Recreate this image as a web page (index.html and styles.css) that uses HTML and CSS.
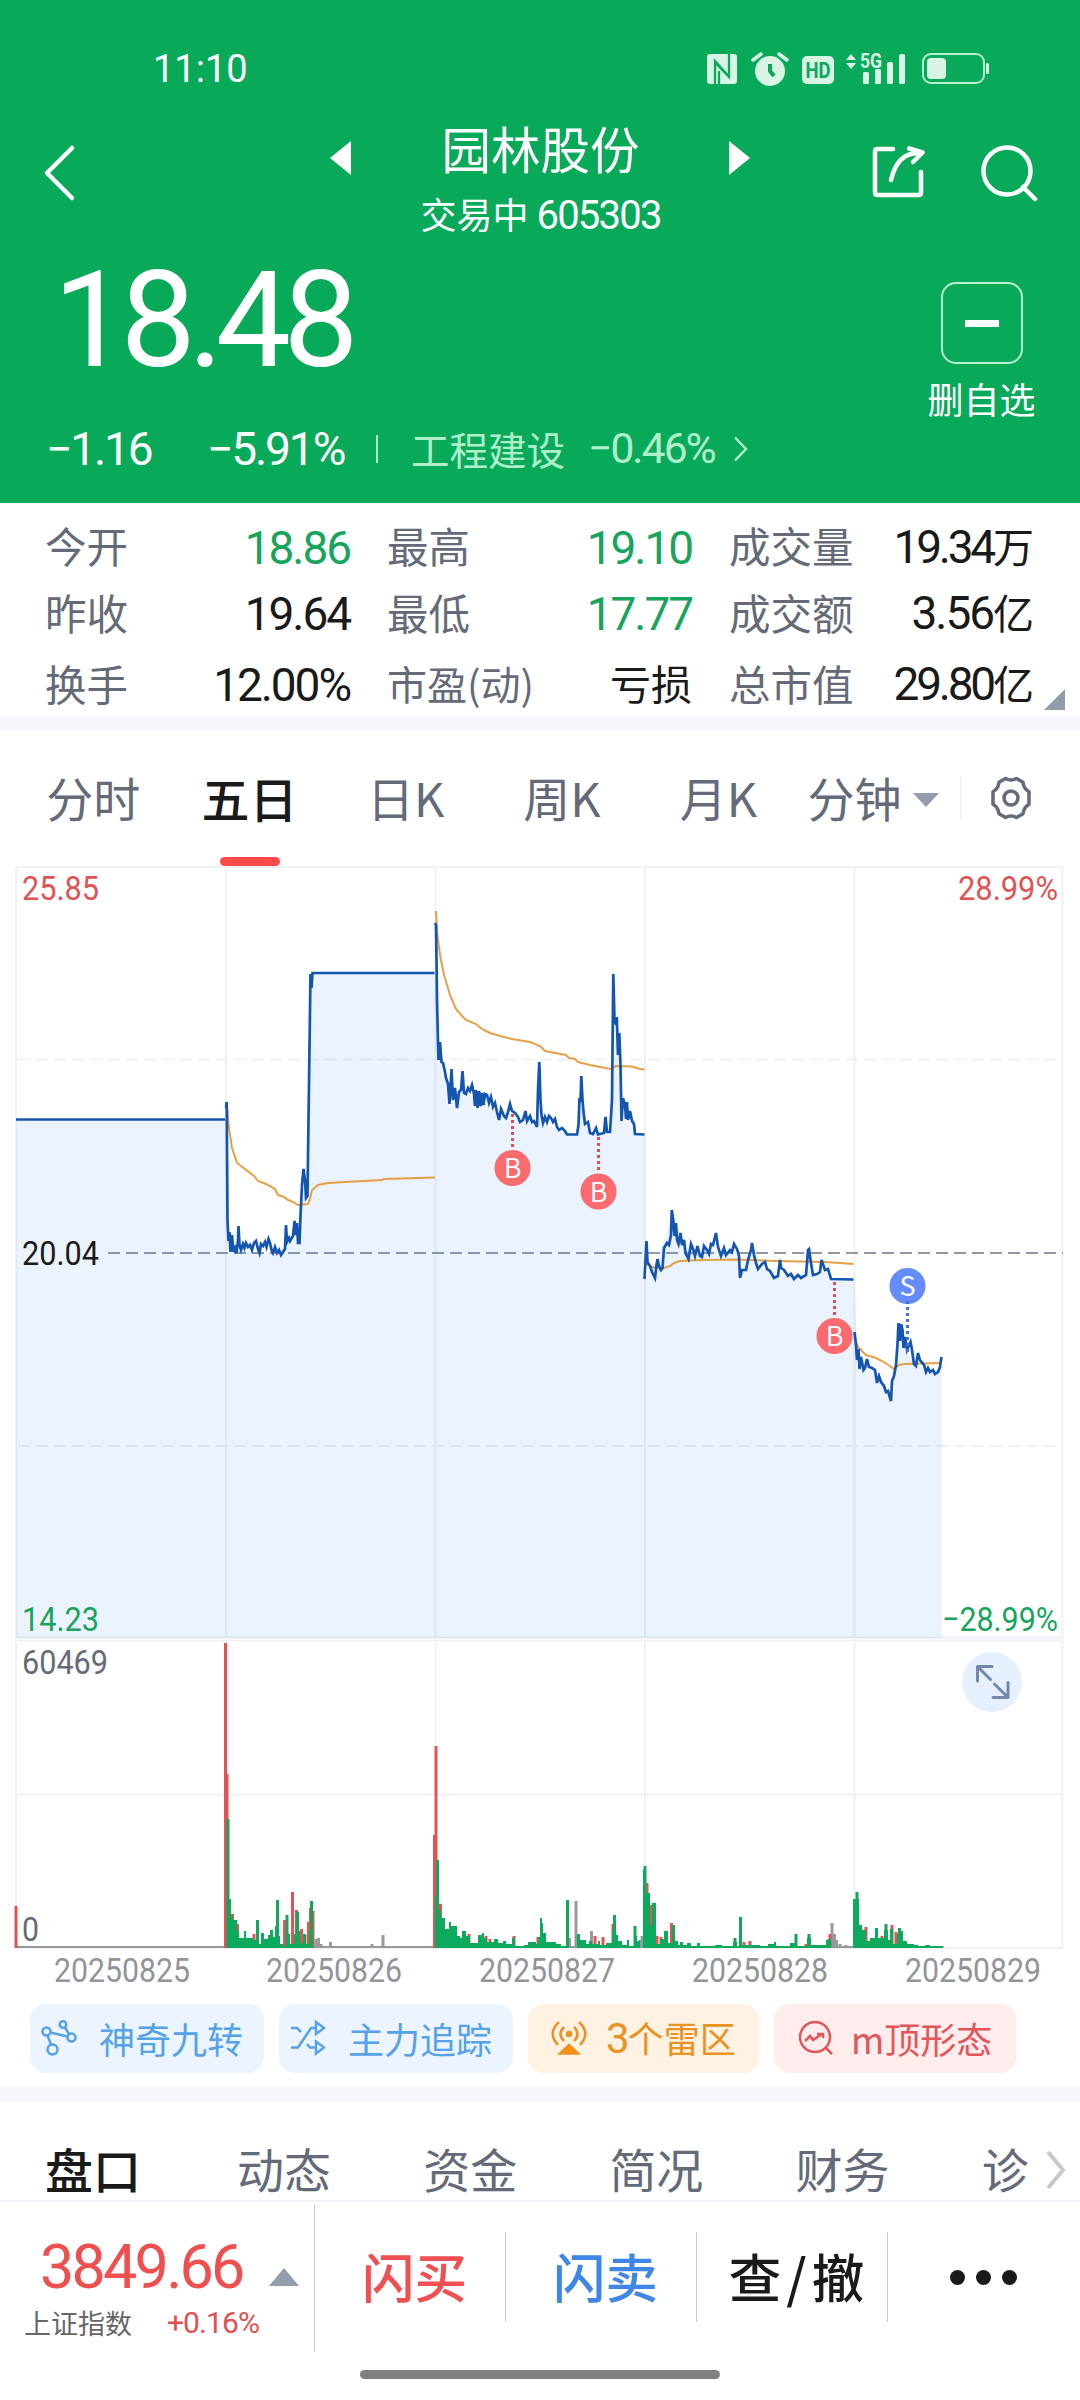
FILE: index.html
```html
<!DOCTYPE html>
<html lang="zh-CN">
<head>
  <meta charset="UTF-8">
  <title>园林股份 605303</title>
  <link rel="stylesheet" href="styles.css">
</head>
<body>
  <div class="screen">
    <header class="top">
      <div class="status">
        <span class="time">11:10</span>
        <svg class="status-icons" width="284" height="36" viewBox="0 0 284 36">
          <g fill="#d8f4e5">
            <rect x="1" y="4" width="30" height="30" rx="3"/>
            <circle cx="64" cy="21" r="15"/>
            <path d="M55 4l-8 6M73 4l8 6" stroke="#d8f4e5" stroke-width="3.500" stroke-linecap="round"/>
            <rect x="96" y="6" width="32" height="28" rx="5"/>
            <path d="M140 10l5-6 5 6zM140 13l5 6 5-6z"/>
            <rect x="157" y="22" width="6" height="12" rx="1.500"/>
            <rect x="169" y="19" width="6" height="15" rx="1.500"/>
            <rect x="181" y="12" width="6" height="22" rx="1.500"/>
            <rect x="193" y="4" width="6" height="30" rx="1.500"/>
            <rect x="221" y="8" width="19" height="21" rx="4"/>
            <rect x="280" y="13" width="3" height="11" rx="1.500"/>
          </g>
          <path d="M9 34V11L22 25.500M13 21V34M23 4V27L10 13.500" fill="none" stroke="#08aa5a" stroke-width="2.300"/>
          <path d="M64 14v7l4 5" fill="none" stroke="#08aa5a" stroke-width="4"/>
          <text class="hd" x="99.500" y="27.500" textLength="25" lengthAdjust="spacingAndGlyphs">HD</text>
          <text class="g5" x="154" y="17.500" textLength="22" lengthAdjust="spacingAndGlyphs">5G</text>
          <rect x="217" y="4" width="61" height="29" rx="8" fill="none" stroke="#b5f0cf" stroke-width="2"/>
        </svg>
      </div>

      <div class="nav">
        <svg class="back" width="34" height="58" viewBox="0 0 34 58"><path d="M30 4L5 29L30 54"/></svg>
        <svg width="22" height="34" class="prev"><path d="M21 0V34L0 17z" fill="#fff"/></svg>
        <div class="name">
          <h1>园林股份</h1>
          <p>交易中 <span class="num">605303</span></p>
        </div>
        <svg width="22" height="34" class="next"><path d="M0 0V34L21 17z" fill="#fff"/></svg>
        <svg class="share" width="56" height="56" viewBox="0 0 56 56">
          <path d="M22 5H6.500Q4 5 4 7.500V48.500Q4 51 6.500 51H47.500Q50 51 50 48.500V28M20 36C24 18 34 8 50 9M38 4.500L51.500 8.500L42 18"/>
        </svg>
        <svg class="search" width="58" height="58" viewBox="0 0 58 58"><circle cx="27" cy="27" r="23.500"/><path d="M43 43L55 55"/></svg>
      </div>

      <div class="quote">
        <div class="price num">18.48</div>
        <div class="remove">
          <span class="minus"></span>
          <span>删自选</span>
        </div>
      </div>

      <div class="change">
        <span class="num diff">−1.16</span>
        <span class="num pct">−5.91%</span>
        <i class="bar"></i>
        <span class="sector">工程建设</span>
        <span class="num sector-pct">−0.46%</span>
        <svg width="16" height="26" viewBox="0 0 16 26"><path d="M2 1.500L13 13L2 24.500" fill="none" stroke="#b0efcb" stroke-width="2.500"/></svg>
      </div>
    </header>

    <section class="stats">
      <div><label>今开</label><b class="num green">18.86</b></div>
      <div><label>最高</label><b class="num green">19.10</b></div>
      <div><label>成交量</label><b class="num tight">19.34<em>万</em></b></div>
      <div><label>昨收</label><b class="num">19.64</b></div>
      <div><label>最低</label><b class="num green">17.77</b></div>
      <div><label>成交额</label><b class="num">3.56<em>亿</em></b></div>
      <div><label>换手</label><b class="num">12.00%</b></div>
      <div><label class="pe">市盈(动)</label><b class="num"><em>亏损</em></b></div>
      <div><label>总市值</label><b class="num tight">29.80<em>亿</em></b></div>
      <i class="more-corner"></i>
    </section>

    <nav class="periods">
      <span>分时</span>
      <span class="active">五日</span>
      <span>日K</span>
      <span>周K</span>
      <span>月K</span>
      <span class="minute">分钟<i class="caret"></i></span>
      <span class="settings">
        <svg width="48" height="48" viewBox="0 0 48 48">
          <path d="M18.500 4.500Q24 7.500 29.500 4.500L36 8.200Q36.500 14.500 42 17.800V30.200Q36.500 33.500 36 39.800L29.500 43.500Q24 40.500 18.500 43.500L12 39.800Q11.500 33.500 6 30.200V17.800Q11.500 14.500 12 8.200Z"/>
          <circle cx="24" cy="24" r="7"/>
        </svg>
      </span>
    </nav>

    <svg class="chart" width="1080" height="1124" viewBox="0 866 1080 1124">
      <!-- grid -->
      <path class="grid" d="M16 867H1063M16 1637.500H1063M16 1640.500H1063M16 1794.500H1063M16 1948H1063M16 867V1948M226 867V1948M435.500 867V1948M645 867V1948M854.500 867V1948M1062.500 867V1948"/>
      <path class="grid dashed" d="M18 1059.500H1063M18 1446H1063"/>
      <path class="mid dashed" d="M108 1253H1063"/>

      <!-- area under the price -->
      <path class="area" d="M16 1638V1119.500H226L227.500 1220L230 1250L281 1254L286 1240L298 1240L302 1185L307.500 1196L310.500 974H435.500L438 1050L450 1092L480 1098L500 1114L537 1125L539.300 1062L543 1123L567 1134H577L581 1080L585 1124L593 1134H610L613.300 974L620.500 1065L622 1110L635 1134H645V1279L656.500 1265L671.800 1212L685 1250L738 1253L740 1278L752 1245L760 1267L778 1276L806 1275L809 1250L813 1275L825 1270L831 1279.500H854.500L857 1355L875 1370L891 1401L899 1330L914 1364L926 1370L938 1372L942 1357V1638Z"/>

      <!-- average -->
      <g class="avg">
        <polyline points="227 1105 229 1128 232 1148 237 1163 245 1169 254 1176 258 1181 266 1184 275 1189 278 1195 284 1197 288 1200 293 1202 298 1205 308 1204 310 1199 312 1190 318 1185 328 1183 345 1182 382 1180 384 1179 435 1177.500"/>
        <polyline points="436 911 437 932 440 955 444 975 450 995 456 1009 462 1016 466 1020 476 1024 482 1029 490 1033 500 1036 512 1039 530 1042 540 1046 545 1051 555 1053 566 1055 569 1058 575 1059 578 1062 590 1065 600 1067 611 1069 616 1066 632 1066.500 640 1069 644.500 1069.500"/>
        <polyline points="645 1264 655 1268 664 1268 670 1266 674 1263 680 1261 700 1260 738 1259.500 775 1261 800 1261.500 825 1262 840 1263 853.500 1264"/>
        <polyline points="854.500 1338 858 1347 866 1355 876 1358 884 1362 894 1369 899 1365 905 1364 941 1363"/>
      </g>

      <!-- price -->
      <g class="line">
        <polyline points="16 1119.500 225 1119.500"/>
        <polyline points="226 1108 226.700 1102 227.500 1220 228.500 1241 229.500 1232 230.500 1252 232 1235 233.500 1252 235 1248 236.500 1253 238 1240 238.500 1226 239.500 1245 241 1250 243 1244 244.500 1248 246 1243 248 1247 250 1245 252 1250 254 1243 256 1241 258 1249 259.500 1253 261 1244 263 1246 265 1242 266.500 1247 268.500 1239 270 1243 271.500 1250 273 1253 275 1247 277 1253 279 1250 281 1255 283 1252 285 1249 286 1225 287 1242 289 1238 290 1241 293 1236 294.500 1221 296 1235 297 1223 298 1243 299.500 1243 300.500 1215 302 1185 303.500 1169 305 1180 306 1198 307.500 1196 308.500 1120 310.500 974 311.500 988 312.500 973 434.500 973"/>
        <polyline points="435 923 436 925 436.500 960 437 1000 438 1042 438.500 1060 440 1042 441.500 1062 443 1063 445 1072 446 1078 448 1084 449.500 1104 451.500 1069 453 1100 455 1088 457 1108 459 1092 461 1090 462.500 1071 464 1093 466 1094 468 1088 470 1091 472 1085 474 1094 475 1106 476 1090 477.500 1108 479 1091 480.500 1106 482 1093 483.500 1105 485 1094 487 1095 489 1103 491 1097 493 1107 495 1103 497 1112 499 1120 501 1109 504 1116 506 1118 508 1112 510 1104 512 1111 515 1113 518 1117 520 1122 523 1120 525.500 1111 527 1121 530 1116 532 1122 534 1121 537 1127 538 1090 539.300 1062 540.500 1100 541.500 1115 543 1123 545 1117 547 1122 549 1116 551 1118 553 1122 555 1119 557 1127 559 1130 562 1128 565 1131 567 1134.500 577 1134.500 578.500 1125 579.500 1098 580.500 1102 581.300 1076 582.500 1100 583.500 1112 585 1124 588 1122 590 1133 593 1134 595 1130 596 1128 598 1134.500 604 1133 605.500 1117 607 1132 610 1132 612 1100 612.500 1050 613.300 974 614.500 1022 616 1024 616.800 1017 618 1055 619.300 1033 620.500 1065 621.500 1121 623 1098 625 1105 626 1119 627 1102 628 1120 630 1111 632 1121 634 1124 635 1134 644.500 1134.500"/>
        <polyline points="644.500 1279 646.500 1241 647.500 1262 650 1266 652 1272 655 1278 656.500 1265 657.500 1259 659 1266 661 1270 662.500 1268 664 1248 667 1243 669 1245 671 1235 671.800 1210 673.500 1222 674.500 1236 676 1223 677 1240 678.500 1244 680.500 1233 682 1245 684 1240 685.500 1253 688.500 1259 691 1244 693 1249 695 1256 697.500 1246 700 1256 702 1257 704 1246 707 1250 709 1254 711 1244 713 1245 716 1233 718 1247 721 1256 724 1248 726 1255 730 1250 732 1252 734 1244 737 1249 739 1256 740 1278 742 1270 746 1270 748 1260 751 1250 752 1243 754 1255 756 1263 758 1269 762 1264 765 1262 767 1269 770 1271 774 1278 778 1276 780 1260 781 1268 784 1270 788 1276 791 1274 794 1279 798 1275 801 1278 806 1275 808 1250 809 1249 811 1263 813 1275 817 1274 820 1272 821.500 1260 825 1270 828 1269 831 1279 853.500 1279.500"/>
        <polyline points="854.500 1332 856 1345 857 1360 858.500 1349 859.500 1369 861 1357 863.500 1370 865 1368 867 1359 869 1367 872 1368 875 1370 877 1383 879 1376 881 1382 884 1386 886 1392 888 1391 891 1401 892 1381 894 1376 896 1365 897.500 1344 898.500 1323 900 1341 901 1324 902.500 1330 903.500 1348 905 1337 907 1350 909 1345 910.500 1342 912 1350 914 1364 916 1366 918 1353 920 1360 924 1365 926 1372 928 1368 930 1372 933 1370 935 1374 938 1372 940 1367 941.500 1357"/>
      </g>

      <!-- trades -->
      <g class="trade">
        <path d="M512.500 1114V1149M598.500 1137V1172M834.500 1282V1317"/>
        <circle cx="512.500" cy="1168" r="18"/><text x="512.500" y="1178">B</text>
        <circle cx="598.500" cy="1191.500" r="18"/><text x="598.500" y="1201.500">B</text>
        <circle cx="834.500" cy="1336" r="18"/><text x="834.500" y="1346">B</text>
      </g>
      <g class="trade sell">
        <circle cx="907.500" cy="1286" r="18"/><text x="907.500" y="1296">S</text>
        <path d="M907.500 1301V1352"/>
      </g>

      <!-- volume -->
      <path class="vol-flat" d="M17 1947H225M314 1947H434M568 1947H578M833 1947H853"/>
      <path class="vol grey" d="M316 1948V1939M318.500 1948V1938M321 1948V1944M330.500 1948V1942M372 1948V1944M383 1948V1935M401 1948V1946M569.500 1948V1938M576 1948V1901M591.500 1948V1931M642 1948V1936M640 1948V1940M832 1948V1923M834.500 1948V1934M836.500 1948V1940M840 1948V1944M846 1948V1945"/>
      <path class="vol red" d="M16 1948V1906M225.500 1948V1643M227 1948V1774M232.500 1948V1914M237.500 1948V1924M254 1948V1934M284.500 1948V1920M292.500 1948V1892M296.500 1948V1910M301.500 1948V1929M305 1948V1935M308.500 1948V1922M310.500 1948V1908M313 1948V1911M436 1948V1746M434.500 1948V1835M440.500 1948V1904M469 1948V1934M486 1948V1936M490 1948V1939M514 1948V1936M538 1948V1937M563 1948V1946M595 1948V1936M603 1948V1937M613 1948V1924M647 1948V1883M651 1948V1905M657 1948V1936M661 1948V1937M671.500 1948V1923M676 1948V1941M744 1948V1942M750 1948V1941M806 1948V1944M830 1948V1934M866 1948V1927M882 1948V1936M892 1948V1925M896 1948V1932M942 1948V1946"/>
      <path class="vol green" d="M228 1948V1819M257.500 1948V1920M277.500 1948V1900M287 1948V1915M297.500 1948V1912M311.500 1948V1901M437.500 1948V1860M567.500 1948V1900M614.500 1948V1915M635 1948V1926M645 1948V1866M673.500 1948V1925M735 1948V1938M740.500 1948V1917M796 1948V1934M809 1948V1934M829 1948V1939M857 1948V1892M886 1948V1924M899.500 1948V1928"/>
      <path class="vol-area" d="M227 1948V1899H231V1916H233V1920H237V1931H239V1938H244V1931H246V1938H253V1940H256V1929H259V1944H261V1933H264V1939H268V1935H270V1930H273V1937H275V1926H279V1936H280V1944H283V1946H286V1934H290V1944H294V1934H296V1920H299V1931H300V1943H303V1934H306V1944H309V1930H313V1948ZM435 1948V1897H439V1910H441V1918H445V1929H449V1922H451V1926H457V1936H460V1938H462V1931H466V1936H470V1943H478V1935H482V1933H484V1938H487V1942H494V1939H498V1943H503V1941H506V1944H512V1938H515V1946H524V1945H528V1942H536V1944H538V1937H540V1918H542V1923H543V1933H546V1942H556V1944H561V1946H566V1948ZM577 1948V1934H580V1940H586V1944H589V1941H592V1944H598V1941H600V1945H606V1943H612V1930H616V1935H618V1941H622V1945H627V1940H629V1946H634V1936H637V1941H640V1948ZM643 1948V1870H646V1893H650V1925H652V1903H656V1944H660V1939H664V1931H668V1943H672V1926H675V1941H678V1945H680V1942H683V1945H687V1943H691V1946H697V1943H700V1946H715V1945H722V1946H733V1942H737V1946H739V1930H742V1945H760V1946H768V1944H774V1942H776V1946H790V1943H797V1946H807V1938H811V1945H826V1940H831V1948ZM853 1948V1899H859V1925H862V1930H866V1941H870V1938H875V1928H878V1938H884V1930H888V1940H890V1929H893V1944H897V1934H901V1931H903V1941H907V1944H914V1945H918V1946H925V1945H930V1946H943V1948Z"/>

      <!-- labels -->
      <g class="labels">
        <text class="t-red" x="22" y="900" textLength="77" lengthAdjust="spacingAndGlyphs">25.85</text>
        <text class="t-red" x="958" y="900" textLength="100" lengthAdjust="spacingAndGlyphs">28.99%</text>
        <text class="t-black" x="22" y="1265" textLength="77" lengthAdjust="spacingAndGlyphs">20.04</text>
        <text class="t-green" x="22" y="1631" textLength="77" lengthAdjust="spacingAndGlyphs">14.23</text>
        <text class="t-green" x="942" y="1631" textLength="116" lengthAdjust="spacingAndGlyphs">−28.99%</text>
        <text class="t-grey" x="22" y="1674" textLength="86" lengthAdjust="spacingAndGlyphs">60469</text>
        <text class="t-grey" x="22" y="1941" textLength="17" lengthAdjust="spacingAndGlyphs">0</text>
        <text class="t-date" x="54" y="1982" textLength="136" lengthAdjust="spacingAndGlyphs">20250825</text>
        <text class="t-date" x="266" y="1982" textLength="136" lengthAdjust="spacingAndGlyphs">20250826</text>
        <text class="t-date" x="479" y="1982" textLength="136" lengthAdjust="spacingAndGlyphs">20250827</text>
        <text class="t-date" x="692" y="1982" textLength="136" lengthAdjust="spacingAndGlyphs">20250828</text>
        <text class="t-date" x="905" y="1982" textLength="136" lengthAdjust="spacingAndGlyphs">20250829</text>
      </g>

      <circle cx="992" cy="1682" r="30" fill="#e6f0ff"/>
      <path class="expand" d="M977.500 1681V1666.500H992M977.500 1666.500L990.500 1679.500M994.500 1684L1008 1697.500M1008 1682.500V1697.500H993"/>
    </svg>

    <div class="chips">
      <div class="chip blue">
        <svg width="36" height="36" viewBox="0 0 36 36">
          <circle cx="5.500" cy="11.500" r="4"/><circle cx="22" cy="4.500" r="3.300"/><circle cx="30.500" cy="17.500" r="4"/><circle cx="11.500" cy="29.500" r="5"/>
          <path d="M6.500 15.500L10 24.500M9.500 12.500L26.500 16.500M24 7.500L28 14"/>
        </svg>
        神奇九转
      </div>
      <div class="chip blue">
        <svg width="36" height="36" viewBox="0 0 36 36">
          <path d="M1 8H7L11 12M1 27.500H8L21 8H26M17 24L20 27.500H26M26 2V14L34 8ZM26 21.500V33.500L34 27.500Z"/>
        </svg>
        主力追踪
      </div>
      <div class="chip orange">
        <svg width="36" height="36" viewBox="0 0 36 36">
          <path d="M8 2Q-4 13 7 25M28 2Q40 13 29 25M13 7Q6 14 13 21M23 7Q30 14 23 21"/>
          <circle cx="18" cy="14" r="2" fill="#ef9215"/><path d="M18 25L27 33.500H9Z" fill="#ff9100"/>
        </svg>
        <span><span class="num">3</span>个雷区</span>
      </div>
      <div class="chip rose">
        <svg width="36" height="36" viewBox="0 0 36 36">
          <circle cx="17" cy="17" r="15"/><path d="M28 28L34 34M7 21L12 16L15 20L24 14M19 14H25V18"/>
        </svg>
        m顶形态
      </div>
    </div>

    <nav class="sections">
      <span class="active">盘口</span>
      <span>动态</span>
      <span>资金</span>
      <span>简况</span>
      <span>财务</span>
      <span class="cut">诊</span>
      <svg width="22" height="40" viewBox="0 0 22 40"><path d="M3 2L18 20L3 38" fill="none" stroke="#c5c8ce" stroke-width="4"/></svg>
    </nav>

    <footer class="dock">
      <div class="index">
        <div class="index-value"><span class="num">3849.66</span><i></i></div>
        <div class="index-name">上证指数 <span class="num">+0.16%</span></div>
      </div>
      <div class="action buy">闪买</div>
      <div class="action sell-btn">闪卖</div>
      <div class="action">查<span class="slash">/</span>撤</div>
      <div class="action dots"><i></i><i></i><i></i></div>
    </footer>
    <div class="home"></div>
  </div>
</body>
</html>
```

FILE: styles.css
```css
:root {
  --green: #08aa5a;
  --green-text: #17a45c;
  --red: #f04f4f;
  --grey: #656a78;
  --ink: #1a1a1a;
  --band: #f6f8fb;
}
*, *::before, *::after {box-sizing: border-box; margin: 0; padding: 0}
body {
  font-family: 'Noto Sans CJK SC', 'Noto Sans', sans-serif;
  font-weight: 400;
  background: white;
  color: var(--ink);
}
i, em {font-style: normal}
svg {display: block; flex: none}
.num {
  font-family: Roboto, 'Noto Sans CJK SC', sans-serif;
  letter-spacing: -0.045em;
}
.screen {
  width: 1080px;
  height: 2400px;
  overflow: hidden;
  display: flex;
  flex-direction: column;
}
.screen > * {flex: none}

/* header */
.top {
  height: 503px;
  background: var(--green);
  color: white;
}
.status {
  height: 126px;
  padding: 48px 90px 0 153px;
  display: flex;
  justify-content: space-between;
}
.time {
  font-family: Roboto, sans-serif;
  font-size: 38px;
  line-height: 42px;
}
.status-icons {margin-top: 2px}
.hd {
  font: 700 22px Roboto, sans-serif;
  fill: var(--green);
}
.g5 {
  font: 700 20px Roboto, sans-serif;
  fill: #d8f4e5;
}
.nav {
  height: 120px;
  display: grid;
  grid-template-columns: 330px 22px 377px 22px 228px 101px;
}
.nav .back {margin: 18px 0 0 42px}
.nav .prev, .nav .next {margin-top: 15px}
.nav .share {margin: 18px 0 0 120px}
.nav .search {margin: 18px 0 0 1px}
.back, .share, .search {
  fill: none;
  stroke: white;
  stroke-width: 4.5;
  stroke-linecap: round;
  stroke-linejoin: round;
}
.name {text-align: center}
.name h1 {
  font-size: 49.5px;
  line-height: 56px;
  font-weight: 400;
  margin-top: -6px;
}
.name p {
  font-size: 36px;
  line-height: 48px;
  margin-top: 13px;
}
.name .num {font-size: 40px}
.quote {
  height: 174px;
  padding-left: 53px;
  display: flex;
  justify-content: space-between;
}
.price {
  font-size: 134px;
  line-height: 130px;
  margin-top: 10px;
  letter-spacing: -0.058em;
}
.remove {
  width: 197px;
  padding-top: 36px;
  display: flex;
  flex-direction: column;
  align-items: center;
  font-size: 36px;
  line-height: 44px;
}
.minus {
  width: 82px;
  height: 82px;
  margin-bottom: 12px;
  border: 2px solid #b5f0cf;
  border-radius: 15px;
  display: grid;
  place-items: center;
}
.minus::before {
  content: '';
  width: 34px;
  height: 7px;
  background: white;
}
.change {
  height: 56px;
  padding: 1px 0 0 46px;
  display: flex;
  align-items: center;
  font-size: 46px;
  line-height: 56px;
}
.diff {width: 161px}
.pct {width: 169px}
.bar {
  width: 2px;
  height: 28px;
  margin-right: 33px;
  background: #b0efcb;
}
.sector {
  width: 177px;
  margin-top: -2px;
  font-size: 38.5px;
  color: #b0efcb;
}
.sector-pct {
  width: 145px;
  font-size: 42.5px;
  color: #b0efcb;
}

/* numbers grid */
.stats {
  position: relative;
  height: 213px;
  padding: 9px 45px 0;
  display: grid;
  grid-template-columns: repeat(3, 305px);
  grid-template-rows: 66px 67px 75px;
  column-gap: 37px;
}
.stats div {
  display: flex;
  justify-content: space-between;
  align-items: center;
}
.stats label {
  font-size: 41.5px;
  line-height: 60px;
  color: var(--grey);
}
.stats .pe {font-size: 40px}
.stats b {
  font-weight: 400;
  font-size: 46px;
  line-height: 60px;
  margin-top: 5px;
}
.stats .tight {letter-spacing: -0.07em}
.stats em {font-size: 41px; letter-spacing: 0}
.stats .green {color: var(--green-text)}
.more-corner {
  position: absolute;
  right: 15px;
  bottom: 6px;
  border: solid transparent;
  border-width: 21px 0 0 21px;
  border-bottom: 21px solid #929cab;
  border-top: 0;
}

/* period tabs */
.periods {
  height: 150px;
  border-top: 15px solid var(--band);
  padding-left: 15px;
  display: grid;
  grid-template-columns: repeat(5, 156.3px) 164px 1fr;
  text-align: center;
  font-size: 47px;
  line-height: 68px;
  color: var(--grey);
}
.periods span {padding-top: 32px}
.periods .active {
  position: relative;
  color: var(--ink);
  font-weight: 500;
  font-size: 48px;
}
.periods .active::after {
  content: '';
  position: absolute;
  left: 49px;
  bottom: 0;
  width: 60px;
  height: 9px;
  border-radius: 4.5px;
  background: #ff4a4c;
}
.minute {
  display: flex;
  align-items: center;
  padding-left: 11px;
  height: 100px;
}
.caret {
  margin: 6px 0 0 12px;
  border: 13px solid transparent;
  border-top: 14px solid #929cab;
  border-bottom: 0;
}
.periods .settings {
  height: 44px;
  margin-top: 45px;
  padding: 0 0 0 25px;
  border-left: 2px solid #f2f3f7;
}
.settings svg {
  margin-top: -2px;
  fill: none;
  stroke: var(--grey);
  stroke-width: 3.5;
  stroke-linejoin: round;
}

/* chart */
.grid {
  fill: none;
  stroke: #eff1f6;
  stroke-width: 2;
}
.dashed {stroke-dasharray: 12 6}
.mid {stroke: #9199a9; stroke-width: 2}
.area {fill: rgba(55, 140, 245, .1)}
.avg polyline {
  fill: none;
  stroke: #e5a046;
  stroke-width: 2;
}
.line polyline {
  fill: none;
  stroke: #1455b0;
  stroke-width: 2.7;
}
.trade path {
  stroke: #df4d57;
  stroke-width: 3;
  stroke-dasharray: 3 3;
}
.trade circle {fill: #fa6a6f}
.trade text {
  font: 400 27px 'Noto Sans CJK SC', sans-serif;
  fill: white;
  text-anchor: middle;
}
.sell circle {fill: #648dfb}
.sell path {stroke: #4470cf}
.vol {fill: none; stroke-width: 3}
.vol.red {stroke: #e35355}
.vol.green {stroke: #16a45c}
.vol.grey {stroke: #97999e}
.vol-flat {stroke: #97999e; stroke-width: 2}
.vol-area {fill: #0caa5c}
.labels text {
  font-family: Roboto, sans-serif;
  font-size: 34px;
}
.t-red {fill: #df5355}
.t-green {fill: var(--green-text)}
.t-black {fill: var(--ink)}
.t-grey {fill: var(--grey)}
.t-date {fill: #929499}
.expand {
  fill: none;
  stroke: #7189ad;
  stroke-width: 3;
  stroke-linecap: round;
  stroke-linejoin: round;
}

/* signal chips */
.chips {
  height: 97px;
  padding: 14px 30px 0;
  display: flex;
  gap: 15px;
}
.chip {
  height: 69px;
  padding-bottom: 2px;
  border-radius: 16px;
  display: flex;
  align-items: center;
  font-size: 36px;
  line-height: 60px;
  white-space: nowrap;
}
.chip svg {
  fill: none;
  stroke: currentColor;
  stroke-width: 2.5;
}
.blue {
  width: 234px;
  padding-left: 11px;
  gap: 22px;
  background: #ecf5ff;
  color: #55a2e6;
}
.orange {
  width: 231px;
  padding-left: 23px;
  gap: 19px;
  background: #fff2e3;
  color: #e99322;
}
.orange .num {font-size: 42px}
.rose {
  width: 242px;
  padding-left: 24px;
  gap: 17px;
  background: #ffecec;
  color: #e0565a;
}

/* detail tabs */
.sections {
  height: 115px;
  border-top: 15px solid var(--band);
  border-bottom: 2px solid #f0f1f4;
  padding: 31px 0 0 45px;
  display: flex;
  font-size: 47px;
  line-height: 70px;
  color: var(--grey);
}
.sections span {width: 186.2px}
.sections .active {
  width: 192px;
  color: var(--ink);
  font-weight: 500;
  font-size: 48px;
}
.sections .cut {width: 63px}
.sections svg {margin-top: 17px}

/* bottom bar */
.dock {
  height: 158px;
  display: flex;
}
.index {
  width: 315px;
  height: 148px;
  margin-top: 2px;
  border-right: 1px solid #c9cace;
}
.index-value {
  height: 86px;
  padding: 40px 0 0 40px;
  display: flex;
  align-items: center;
  font-size: 61px;
  line-height: 46px;
  color: var(--red);
}
.index-value span {width: 229px}
.index-value i {
  margin-top: 20px;
  border: 15px solid transparent;
  border-bottom: 18px solid #929cab;
  border-top: 0;
}
.index-name {
  padding: 13px 16px 0 24px;
  display: flex;
  gap: 35px;
  font-size: 27px;
  line-height: 40px;
  color: #666;
}
.index-name .num {
  font-size: 30px;
  letter-spacing: -0.03em;
  color: #df5053;
}
.action {
  width: 191px;
  height: 90px;
  margin-top: 30px;
  padding: 0 0 4px 9px;
  border-right: 1px solid #c9cace;
  display: flex;
  justify-content: center;
  align-items: center;
  font-size: 52.5px;
  line-height: 80px;
  font-weight: 500;
}
.buy {color: #f05052}
.sell-btn {color: #3f86e6}
.slash {padding: 0 5px}
.dots {
  border: 0;
  padding: 0;
  gap: 11px;
}
.dots i {
  width: 15px;
  height: 15px;
  border-radius: 50%;
  background: var(--ink);
}
.home {
  width: 360px;
  height: 9px;
  margin: 10px auto 0;
  border-radius: 4.5px;
  background: #808080;
}
```
